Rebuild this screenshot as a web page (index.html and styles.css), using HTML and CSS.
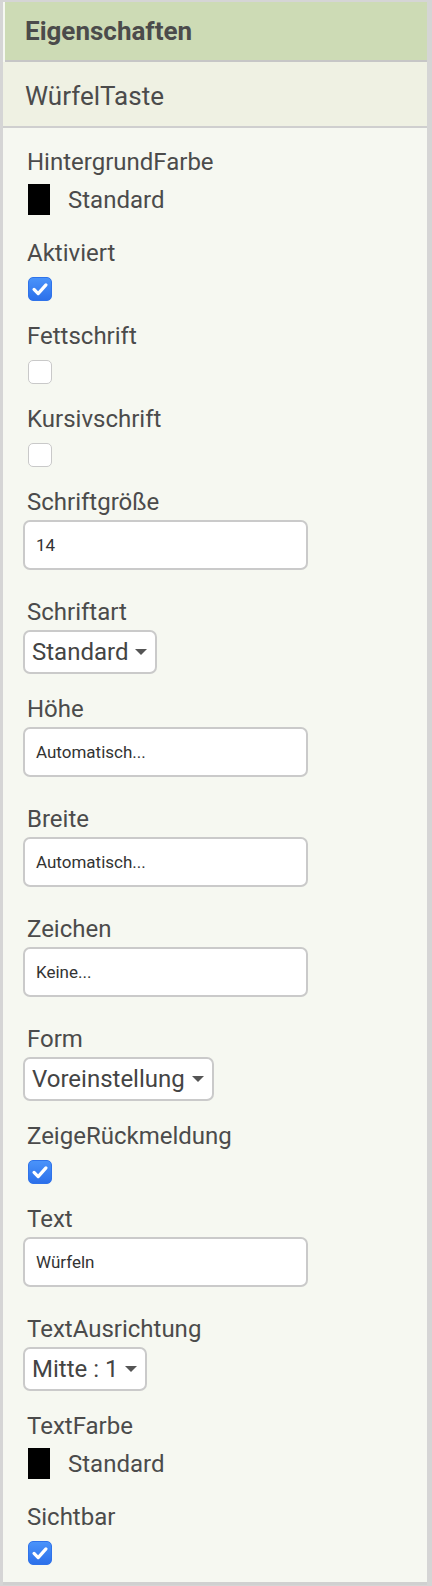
FILE: index.html
```html
<!DOCTYPE html>
<html lang="de">
<head>
    <meta charset="UTF-8">
    <meta name="viewport" content="width=device-width, initial-scale=1.0">
    <title>Eigenschaften</title>
    <link rel="stylesheet" href="styles.css">
</head>
<body>

    <div class="panel">
        <div class="panel-head">Eigenschaften</div>
        <div class="panel-sub">WürfelTaste</div>

        <div class="props">
            <div class="prop">
                <div class="prop-label">HintergrundFarbe</div>
                <div class="farbe"><span class="swatch"></span>Standard</div>
            </div>

            <div class="prop">
                <div class="prop-label">Aktiviert</div>
                <span class="check on"><svg viewBox="0 0 24 24"><polyline points="5.5,12.5 10,17 18.5,7.5"/></svg></span>
            </div>

            <div class="prop">
                <div class="prop-label">Fettschrift</div>
                <span class="check"></span>
            </div>

            <div class="prop">
                <div class="prop-label">Kursivschrift</div>
                <span class="check"></span>
            </div>

            <div class="prop">
                <div class="prop-label">Schriftgröße</div>
                <div class="feld">14</div>
            </div>

            <div class="prop">
                <div class="prop-label">Schriftart</div>
                <div class="auswahl">Standard<span class="pfeil"></span></div>
            </div>

            <div class="prop">
                <div class="prop-label">Höhe</div>
                <div class="feld">Automatisch...</div>
            </div>

            <div class="prop">
                <div class="prop-label">Breite</div>
                <div class="feld">Automatisch...</div>
            </div>

            <div class="prop">
                <div class="prop-label">Zeichen</div>
                <div class="feld">Keine...</div>
            </div>

            <div class="prop">
                <div class="prop-label">Form</div>
                <div class="auswahl">Voreinstellung<span class="pfeil"></span></div>
            </div>

            <div class="prop">
                <div class="prop-label">ZeigeRückmeldung</div>
                <span class="check on"><svg viewBox="0 0 24 24"><polyline points="5.5,12.5 10,17 18.5,7.5"/></svg></span>
            </div>

            <div class="prop">
                <div class="prop-label">Text</div>
                <div class="feld">Würfeln</div>
            </div>

            <div class="prop">
                <div class="prop-label">TextAusrichtung</div>
                <div class="auswahl">Mitte : 1<span class="pfeil"></span></div>
            </div>

            <div class="prop">
                <div class="prop-label">TextFarbe</div>
                <div class="farbe"><span class="swatch"></span>Standard</div>
            </div>

            <div class="prop">
                <div class="prop-label">Sichtbar</div>
                <span class="check on"><svg viewBox="0 0 24 24"><polyline points="5.5,12.5 10,17 18.5,7.5"/></svg></span>
            </div>
        </div>
    </div>

</body>
</html>
```

FILE: styles.css
```css
body {
    margin: 0;
    background: #d5d5d5;
    font-family: Roboto, 'Noto Sans', sans-serif;
    color: #4b4b4b;
}
.panel {
    margin: 2px 5px 0 3px;
    background: #f6f8f1;
    border-bottom: 3px solid #d0d0d0;
}
.panel-head {
    height: 58px;
    line-height: 58px;
    padding-left: 20px;
    margin-left: 2px;
    background: #cddbb5;
    font-size: 26px;
    font-weight: bold;
    border-bottom: 2px solid #c6c6c6;
}
.panel-sub {
    height: 60px;
    padding: 4px 0 0 22px;
    line-height: 60px;
    background: #eff1e3;
    font-size: 26px;
    border-bottom: 2px solid #cfcfcf;
}
.props {
    display: flex;
    flex-direction: column;
    padding: 20px 0 17px 24px;
}
.prop {
    display: flex;
    flex-direction: column;
    align-items: flex-start;
}
.prop-label {
    font-size: 24px;
    line-height: 28px;
}

/* farbe */
.farbe {
    display: flex;
    align-items: center;
    margin: 8px 0 24px 1px;
    font-size: 24px;
    height: 31px;
}
.swatch {
    width: 22px;
    height: 31px;
    background: #000;
    margin-right: 18px;
}

/* checkbox */
.check {
    width: 22px;
    height: 22px;
    margin: 10px 0 21px 1px;
    border: 1px solid #c9c9c9;
    border-radius: 5px;
    background: #fff;
}
.check.on {
    border-color: #2f73ea;
    background: linear-gradient(#4a93fa, #2c70ea);
}
.check svg {
    display: block;
    width: 22px;
    height: 22px;
    fill: none;
    stroke: #fff;
    stroke-width: 3.5;
    stroke-linecap: round;
    stroke-linejoin: round;
}

/* textfeld */
.feld {
    box-sizing: border-box;
    width: 285px;
    height: 50px;
    margin: 4px 0 28px -4px;
    padding: 0 11px;
    line-height: 46px;
    font-size: 17px;
    color: #333;
    background: #fff;
    border: 2px solid #cacaca;
    border-radius: 7px;
}

/* auswahl */
.auswahl {
    box-sizing: border-box;
    display: flex;
    align-items: center;
    height: 44px;
    margin: 4px 0 21px -4px;
    padding: 0 8px 0 7px;
    font-size: 24px;
    color: #444;
    background: #fff;
    border: 2px solid #cacaca;
    border-radius: 7px;
}
.pfeil {
    margin-left: 7px;
    border-left: 6px solid transparent;
    border-right: 6px solid transparent;
    border-top: 6px solid #555;
}
.prop:last-child .check {
    margin-bottom: 0;
}
```
